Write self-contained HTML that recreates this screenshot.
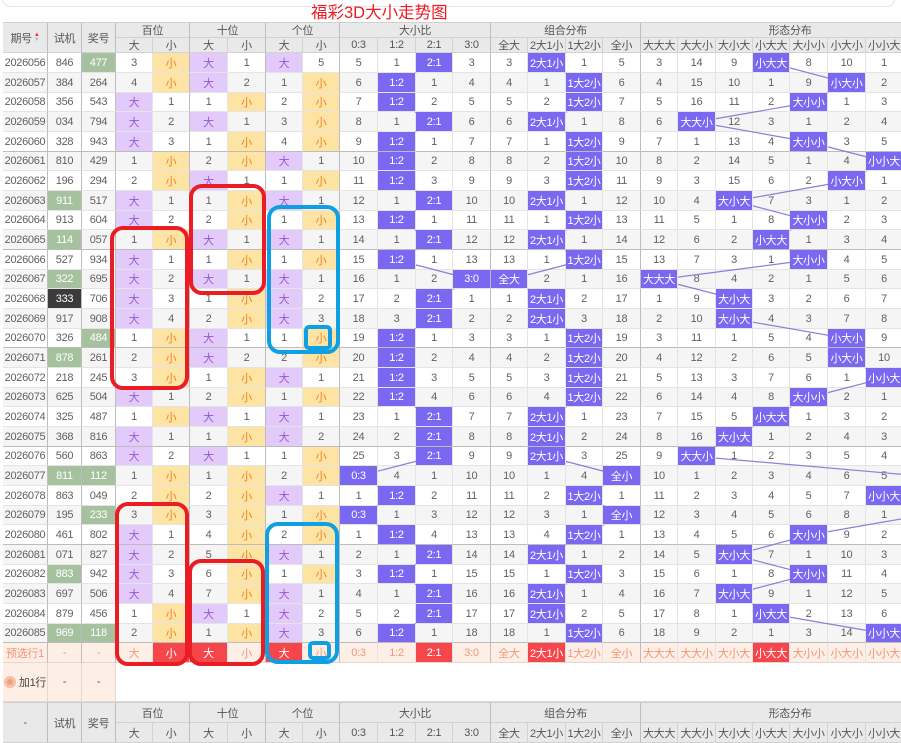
<!DOCTYPE html>
<html><head><meta charset="utf-8"><style>
*{box-sizing:border-box}
body{margin:0;width:901px;height:742px;overflow:hidden;background:#fff;font-family:"Liberation Sans","Noto Sans CJK SC",sans-serif;position:relative}
.cols{display:grid;grid-template-columns:45px 34px 34px 37px 37px 38px 38px 37px 37px 38px 38px 37px 38px 37px 38px 37px 38px 37px 38px 37px 37px 38px 38px 37px 37px;width:937px}
#d{position:absolute;left:3px;top:53px}
.r{height:20px}
#d .r:nth-child(3n){height:19px}
.r>i,.h>i,.p>i,.a>i{font-style:normal;display:flex;align-items:center;justify-content:center;border-right:1px solid #e4e4e4;border-bottom:1px solid #e4e4e4;color:#606060;font-size:11px;white-space:nowrap;overflow:hidden;letter-spacing:-0.3px}
.r.e{background:#f5f5f5}
.r.b>i{border-bottom-color:#bcbcbc}
.r>i:nth-child(1),.r>i:nth-child(2),.r>i:nth-child(3),.r>i:nth-child(5),.r>i:nth-child(7),.r>i:nth-child(9),.r>i:nth-child(13),.r>i:nth-child(17),
.p>i:nth-child(1),.p>i:nth-child(2),.p>i:nth-child(3),.p>i:nth-child(5),.p>i:nth-child(7),.p>i:nth-child(9),.p>i:nth-child(13),.p>i:nth-child(17){border-right-color:#bdbdbd}
.D{background:#e2cbfa;color:#9a56cf!important}
.X{background:#fde3a4;color:#f08424!important}
.H{background:#7b68f0;color:#fff!important;position:relative;z-index:2}
.G{background:#a6c19e;color:#fff!important}
.K{background:#3b3b3b;color:#fff!important}
.h{position:absolute;left:3px;grid-template-rows:15px 15px;background:#e9e9e9;border-top:1px solid #d0d0d0}
.h>i{border-color:#d2d2d2;color:#555;font-size:11px}
.h>i.gb{border-right-color:#bdbdbd}
.p{position:absolute;left:3px;top:643px;height:20px;background:#fdeee6}
.p>i{color:#f0977a;border-bottom-color:#e8d6cc}
.p>i.R{background:#f5474b;color:#fff}
.a{position:absolute;left:3px;top:663px;height:39px;display:grid;grid-template-columns:45px 34px 34px 785px}
.a>i{background:#fdeee6;border-color:#e6d6cf;color:#555}
.a>i:last-child{background:#fff;border-right:none}
</style></head><body>
<div style="position:absolute;left:2px;top:-12px;width:893px;height:19px;border:1px solid #e6e6e6;border-radius:8px"></div>
<div style="position:absolute;left:311px;top:3px;font-size:16.5px;line-height:20px;color:#ec1c24;white-space:nowrap;z-index:4">福彩3D大小走势图</div>

<div class="cols h" style="top:22px;height:31px">
<i class="gb" style="grid-row:1/3;grid-column:1">期号<span style="display:inline-block;margin-left:2px;line-height:5px;font-size:6px"><span style="color:#e33">▲</span><br><span style="color:#bbb">▼</span></span></i>
<i class="gb" style="grid-row:1/3;grid-column:2">试机</i>
<i class="gb" style="grid-row:1/3;grid-column:3">奖号</i>
<i class="gb" style="grid-column:4/6">百位</i><i class="gb" style="grid-column:6/8">十位</i><i class="gb" style="grid-column:8/10">个位</i>
<i class="gb" style="grid-column:10/14">大小比</i><i class="gb" style="grid-column:14/18">组合分布</i><i class="gb" style="grid-column:18/26">形态分布</i>
<i>大</i><i class="gb">小</i><i>大</i><i class="gb">小</i><i>大</i><i class="gb">小</i><i>0:3</i><i>1:2</i><i>2:1</i><i class="gb">3:0</i><i>全大</i><i>2大1小</i><i>1大2小</i><i class="gb">全小</i><i>大大大</i><i>大大小</i><i>大小大</i><i>小大大</i><i>大小小</i><i>小大小</i><i>小小大</i><i>小小小</i>
</div>

<svg style="position:absolute;left:0;top:0;z-index:1" width="901" height="742"><g fill="none" stroke="#8b80d8" stroke-width="1.2">
<polyline points="434.5,63 397,83 397,102.5 434.5,122 397,142 397,161.5 397,181 434.5,201 397,220.5 434.5,240 397,260 472,279.5 434.5,299 434.5,319 397,338.5 397,358 397,378 397,397.5 434.5,417 434.5,437 434.5,456.5 359,476 397,496 359,515.5 397,535 434.5,555 397,574.5 434.5,594 434.5,614 397,633.5"/>
<polyline points="547,63 584.5,83 584.5,102.5 547,122 584.5,142 584.5,161.5 584.5,181 547,201 584.5,220.5 547,240 584.5,260 509.5,279.5 547,299 547,319 584.5,338.5 584.5,358 584.5,378 584.5,397.5 547,417 547,437 547,456.5 622,476 584.5,496 622,515.5 584.5,535 547,555 584.5,574.5 547,594 547,614 584.5,633.5"/>
<polyline points="771.5,63 847,83 809,102.5 697,122 809,142 884.5,161.5 847,181 734.5,201 809,220.5 771.5,240 809,260 659.5,279.5 734.5,299 734.5,319 847,338.5 847,358 884.5,378 809,397.5 771.5,417 734.5,437 697,456.5 921,476 884.5,496 921,515.5 809,535 734.5,555 809,574.5 734.5,594 771.5,614 884.5,633.5"/>
</g></svg>

<div id="d">
<div class="r cols"><i>2026056</i><i>846</i><i class="G">477</i><i>3</i><i class="X">小</i><i class="D">大</i><i>1</i><i class="D">大</i><i>5</i><i>5</i><i>1</i><i class="H">2:1</i><i>3</i><i>3</i><i class="H">2大1小</i><i>1</i><i>5</i><i>3</i><i>14</i><i>9</i><i class="H">小大大</i><i>8</i><i>10</i><i>1</i></div>
<div class="r cols e"><i>2026057</i><i>384</i><i>264</i><i>4</i><i class="X">小</i><i class="D">大</i><i>2</i><i>1</i><i class="X">小</i><i>6</i><i class="H">1:2</i><i>1</i><i>4</i><i>4</i><i>1</i><i class="H">1大2小</i><i>6</i><i>4</i><i>15</i><i>10</i><i>1</i><i>9</i><i class="H">小大小</i><i>2</i></div>
<div class="r cols"><i>2026058</i><i>356</i><i>543</i><i class="D">大</i><i>1</i><i>1</i><i class="X">小</i><i>2</i><i class="X">小</i><i>7</i><i class="H">1:2</i><i>2</i><i>5</i><i>5</i><i>2</i><i class="H">1大2小</i><i>7</i><i>5</i><i>16</i><i>11</i><i>2</i><i class="H">大小小</i><i>1</i><i>3</i></div>
<div class="r cols e"><i>2026059</i><i>034</i><i>794</i><i class="D">大</i><i>2</i><i class="D">大</i><i>1</i><i>3</i><i class="X">小</i><i>8</i><i>1</i><i class="H">2:1</i><i>6</i><i>6</i><i class="H">2大1小</i><i>1</i><i>8</i><i>6</i><i class="H">大大小</i><i>12</i><i>3</i><i>1</i><i>2</i><i>4</i></div>
<div class="r cols b"><i>2026060</i><i>328</i><i>943</i><i class="D">大</i><i>3</i><i>1</i><i class="X">小</i><i>4</i><i class="X">小</i><i>9</i><i class="H">1:2</i><i>1</i><i>7</i><i>7</i><i>1</i><i class="H">1大2小</i><i>9</i><i>7</i><i>1</i><i>13</i><i>4</i><i class="H">大小小</i><i>3</i><i>5</i></div>
<div class="r cols e"><i>2026061</i><i>810</i><i>429</i><i>1</i><i class="X">小</i><i>2</i><i class="X">小</i><i class="D">大</i><i>1</i><i>10</i><i class="H">1:2</i><i>2</i><i>8</i><i>8</i><i>2</i><i class="H">1大2小</i><i>10</i><i>8</i><i>2</i><i>14</i><i>5</i><i>1</i><i>4</i><i class="H">小小大</i></div>
<div class="r cols"><i>2026062</i><i>196</i><i>294</i><i>2</i><i class="X">小</i><i class="D">大</i><i>1</i><i>1</i><i class="X">小</i><i>11</i><i class="H">1:2</i><i>3</i><i>9</i><i>9</i><i>3</i><i class="H">1大2小</i><i>11</i><i>9</i><i>3</i><i>15</i><i>6</i><i>2</i><i class="H">小大小</i><i>1</i></div>
<div class="r cols e"><i>2026063</i><i class="G">911</i><i>517</i><i class="D">大</i><i>1</i><i>1</i><i class="X">小</i><i class="D">大</i><i>1</i><i>12</i><i>1</i><i class="H">2:1</i><i>10</i><i>10</i><i class="H">2大1小</i><i>1</i><i>12</i><i>10</i><i>4</i><i class="H">大小大</i><i>7</i><i>3</i><i>1</i><i>2</i></div>
<div class="r cols"><i>2026064</i><i>913</i><i>604</i><i class="D">大</i><i>2</i><i>2</i><i class="X">小</i><i>1</i><i class="X">小</i><i>13</i><i class="H">1:2</i><i>1</i><i>11</i><i>11</i><i>1</i><i class="H">1大2小</i><i>13</i><i>11</i><i>5</i><i>1</i><i>8</i><i class="H">大小小</i><i>2</i><i>3</i></div>
<div class="r cols e b"><i>2026065</i><i class="G">114</i><i>057</i><i>1</i><i class="X">小</i><i class="D">大</i><i>1</i><i class="D">大</i><i>1</i><i>14</i><i>1</i><i class="H">2:1</i><i>12</i><i>12</i><i class="H">2大1小</i><i>1</i><i>14</i><i>12</i><i>6</i><i>2</i><i class="H">小大大</i><i>1</i><i>3</i><i>4</i></div>
<div class="r cols"><i>2026066</i><i>527</i><i>934</i><i class="D">大</i><i>1</i><i>1</i><i class="X">小</i><i>1</i><i class="X">小</i><i>15</i><i class="H">1:2</i><i>1</i><i>13</i><i>13</i><i>1</i><i class="H">1大2小</i><i>15</i><i>13</i><i>7</i><i>3</i><i>1</i><i class="H">大小小</i><i>4</i><i>5</i></div>
<div class="r cols e"><i>2026067</i><i class="G">322</i><i>695</i><i class="D">大</i><i>2</i><i class="D">大</i><i>1</i><i class="D">大</i><i>1</i><i>16</i><i>1</i><i>2</i><i class="H">3:0</i><i class="H">全大</i><i>2</i><i>1</i><i>16</i><i class="H">大大大</i><i>8</i><i>4</i><i>2</i><i>1</i><i>5</i><i>6</i></div>
<div class="r cols"><i>2026068</i><i class="K">333</i><i>706</i><i class="D">大</i><i>3</i><i>1</i><i class="X">小</i><i class="D">大</i><i>2</i><i>17</i><i>2</i><i class="H">2:1</i><i>1</i><i>1</i><i class="H">2大1小</i><i>2</i><i>17</i><i>1</i><i>9</i><i class="H">大小大</i><i>3</i><i>2</i><i>6</i><i>7</i></div>
<div class="r cols e"><i>2026069</i><i>917</i><i>908</i><i class="D">大</i><i>4</i><i>2</i><i class="X">小</i><i class="D">大</i><i>3</i><i>18</i><i>3</i><i class="H">2:1</i><i>2</i><i>2</i><i class="H">2大1小</i><i>3</i><i>18</i><i>2</i><i>10</i><i class="H">大小大</i><i>4</i><i>3</i><i>7</i><i>8</i></div>
<div class="r cols b"><i>2026070</i><i>326</i><i class="G">484</i><i>1</i><i class="X">小</i><i class="D">大</i><i>1</i><i>1</i><i class="X">小</i><i>19</i><i class="H">1:2</i><i>1</i><i>3</i><i>3</i><i>1</i><i class="H">1大2小</i><i>19</i><i>3</i><i>11</i><i>1</i><i>5</i><i>4</i><i class="H">小大小</i><i>9</i></div>
<div class="r cols e"><i>2026071</i><i class="G">878</i><i>261</i><i>2</i><i class="X">小</i><i class="D">大</i><i>2</i><i>2</i><i class="X">小</i><i>20</i><i class="H">1:2</i><i>2</i><i>4</i><i>4</i><i>2</i><i class="H">1大2小</i><i>20</i><i>4</i><i>12</i><i>2</i><i>6</i><i>5</i><i class="H">小大小</i><i>10</i></div>
<div class="r cols"><i>2026072</i><i>218</i><i>245</i><i>3</i><i class="X">小</i><i>1</i><i class="X">小</i><i class="D">大</i><i>1</i><i>21</i><i class="H">1:2</i><i>3</i><i>5</i><i>5</i><i>3</i><i class="H">1大2小</i><i>21</i><i>5</i><i>13</i><i>3</i><i>7</i><i>6</i><i>1</i><i class="H">小小大</i></div>
<div class="r cols e"><i>2026073</i><i>625</i><i>504</i><i class="D">大</i><i>1</i><i>2</i><i class="X">小</i><i>1</i><i class="X">小</i><i>22</i><i class="H">1:2</i><i>4</i><i>6</i><i>6</i><i>4</i><i class="H">1大2小</i><i>22</i><i>6</i><i>14</i><i>4</i><i>8</i><i class="H">大小小</i><i>2</i><i>1</i></div>
<div class="r cols"><i>2026074</i><i>325</i><i>487</i><i>1</i><i class="X">小</i><i class="D">大</i><i>1</i><i class="D">大</i><i>1</i><i>23</i><i>1</i><i class="H">2:1</i><i>7</i><i>7</i><i class="H">2大1小</i><i>1</i><i>23</i><i>7</i><i>15</i><i>5</i><i class="H">小大大</i><i>1</i><i>3</i><i>2</i></div>
<div class="r cols e b"><i>2026075</i><i>368</i><i>816</i><i class="D">大</i><i>1</i><i>1</i><i class="X">小</i><i class="D">大</i><i>2</i><i>24</i><i>2</i><i class="H">2:1</i><i>8</i><i>8</i><i class="H">2大1小</i><i>2</i><i>24</i><i>8</i><i>16</i><i class="H">大小大</i><i>1</i><i>2</i><i>4</i><i>3</i></div>
<div class="r cols"><i>2026076</i><i>560</i><i>863</i><i class="D">大</i><i>2</i><i class="D">大</i><i>1</i><i>1</i><i class="X">小</i><i>25</i><i>3</i><i class="H">2:1</i><i>9</i><i>9</i><i class="H">2大1小</i><i>3</i><i>25</i><i>9</i><i class="H">大大小</i><i>1</i><i>2</i><i>3</i><i>5</i><i>4</i></div>
<div class="r cols e"><i>2026077</i><i class="G">811</i><i class="G">112</i><i>1</i><i class="X">小</i><i>1</i><i class="X">小</i><i>2</i><i class="X">小</i><i class="H">0:3</i><i>4</i><i>1</i><i>10</i><i>10</i><i>1</i><i>4</i><i class="H">全小</i><i>10</i><i>1</i><i>2</i><i>3</i><i>4</i><i>6</i><i>5</i></div>
<div class="r cols"><i>2026078</i><i>863</i><i>049</i><i>2</i><i class="X">小</i><i>2</i><i class="X">小</i><i class="D">大</i><i>1</i><i>1</i><i class="H">1:2</i><i>2</i><i>11</i><i>11</i><i>2</i><i class="H">1大2小</i><i>1</i><i>11</i><i>2</i><i>3</i><i>4</i><i>5</i><i>7</i><i class="H">小小大</i></div>
<div class="r cols e"><i>2026079</i><i>195</i><i class="G">233</i><i>3</i><i class="X">小</i><i>3</i><i class="X">小</i><i>1</i><i class="X">小</i><i class="H">0:3</i><i>1</i><i>3</i><i>12</i><i>12</i><i>3</i><i>1</i><i class="H">全小</i><i>12</i><i>3</i><i>4</i><i>5</i><i>6</i><i>8</i><i>1</i></div>
<div class="r cols b"><i>2026080</i><i>461</i><i>802</i><i class="D">大</i><i>1</i><i>4</i><i class="X">小</i><i>2</i><i class="X">小</i><i>1</i><i class="H">1:2</i><i>4</i><i>13</i><i>13</i><i>4</i><i class="H">1大2小</i><i>1</i><i>13</i><i>4</i><i>5</i><i>6</i><i class="H">大小小</i><i>9</i><i>2</i></div>
<div class="r cols e"><i>2026081</i><i>071</i><i>827</i><i class="D">大</i><i>2</i><i>5</i><i class="X">小</i><i class="D">大</i><i>1</i><i>2</i><i>1</i><i class="H">2:1</i><i>14</i><i>14</i><i class="H">2大1小</i><i>1</i><i>2</i><i>14</i><i>5</i><i class="H">大小大</i><i>7</i><i>1</i><i>10</i><i>3</i></div>
<div class="r cols"><i>2026082</i><i class="G">883</i><i>942</i><i class="D">大</i><i>3</i><i>6</i><i class="X">小</i><i>1</i><i class="X">小</i><i>3</i><i class="H">1:2</i><i>1</i><i>15</i><i>15</i><i>1</i><i class="H">1大2小</i><i>3</i><i>15</i><i>6</i><i>1</i><i>8</i><i class="H">大小小</i><i>11</i><i>4</i></div>
<div class="r cols e"><i>2026083</i><i>697</i><i>506</i><i class="D">大</i><i>4</i><i>7</i><i class="X">小</i><i class="D">大</i><i>1</i><i>4</i><i>1</i><i class="H">2:1</i><i>16</i><i>16</i><i class="H">2大1小</i><i>1</i><i>4</i><i>16</i><i>7</i><i class="H">大小大</i><i>9</i><i>1</i><i>12</i><i>5</i></div>
<div class="r cols"><i>2026084</i><i>879</i><i>456</i><i>1</i><i class="X">小</i><i class="D">大</i><i>1</i><i class="D">大</i><i>2</i><i>5</i><i>2</i><i class="H">2:1</i><i>17</i><i>17</i><i class="H">2大1小</i><i>2</i><i>5</i><i>17</i><i>8</i><i>1</i><i class="H">小大大</i><i>2</i><i>13</i><i>6</i></div>
<div class="r cols e b"><i>2026085</i><i class="G">969</i><i class="G">118</i><i>2</i><i class="X">小</i><i>1</i><i class="X">小</i><i class="D">大</i><i>3</i><i>6</i><i class="H">1:2</i><i>1</i><i>18</i><i>18</i><i>1</i><i class="H">1大2小</i><i>6</i><i>18</i><i>9</i><i>2</i><i>1</i><i>3</i><i>14</i><i class="H">小小大</i></div>
</div>

<div class="cols p"><i>预选行1</i><i>-</i><i>-</i><i>大</i><i class="R">小</i><i class="R">大</i><i>小</i><i class="R">大</i><i>小</i><i>0:3</i><i>1:2</i><i class="R">2:1</i><i>3:0</i><i>全大</i><i class="R">2大1小</i><i>1大2小</i><i>全小</i><i>大大大</i><i>大大小</i><i>大小大</i><i class="R">小大大</i><i>大小小</i><i>小大小</i><i>小小大</i></div>

<div class="a"><i><span style="display:inline-block;width:12px;height:12px;border-radius:50%;background:#f4a07a;border:3px solid #f7bfa3;margin-right:3px"></span><b style="font-weight:normal;color:#444">加1行</b></i><i>-</i><i>-</i><i></i></div>

<div class="cols h" style="top:702px;grid-template-rows:20px 20px;height:40px">
<i class="gb" style="grid-row:1/3;grid-column:1">-</i>
<i class="gb" style="grid-row:1/3;grid-column:2">试机</i>
<i class="gb" style="grid-row:1/3;grid-column:3">奖号</i>
<i class="gb" style="grid-column:4/6">百位</i><i class="gb" style="grid-column:6/8">十位</i><i class="gb" style="grid-column:8/10">个位</i>
<i class="gb" style="grid-column:10/14">大小比</i><i class="gb" style="grid-column:14/18">组合分布</i><i class="gb" style="grid-column:18/26">形态分布</i>
<i>大</i><i class="gb">小</i><i>大</i><i class="gb">小</i><i>大</i><i class="gb">小</i><i>0:3</i><i>1:2</i><i>2:1</i><i class="gb">3:0</i><i>全大</i><i>2大1小</i><i>1大2小</i><i class="gb">全小</i><i>大大大</i><i>大大小</i><i>大小大</i><i>小大大</i><i>大小小</i><i>小大小</i><i>小小大</i><i>小小小</i>
</div>

<svg style="position:absolute;left:0;top:0;z-index:3" width="901" height="742"><g fill="none" stroke-width="4">
<rect x="191" y="186" width="73" height="107" rx="11" stroke="#ea1c24"/>
<rect x="112" y="228" width="75" height="160" rx="11" stroke="#ea1c24"/>
<rect x="117" y="504" width="70" height="160" rx="11" stroke="#ea1c24"/>
<rect x="190" y="561" width="73" height="103" rx="11" stroke="#ea1c24"/>
<rect x="269" y="207" width="69" height="145" rx="11" stroke="#0ea0e2"/>
<rect x="306" y="327" width="24" height="21" rx="3" stroke="#0ea0e2"/>
<rect x="267" y="524" width="70" height="138" rx="11" stroke="#0ea0e2"/>
<rect x="310" y="643" width="19" height="15" rx="3" stroke="#0ea0e2"/>
</g></svg>
</body></html>
